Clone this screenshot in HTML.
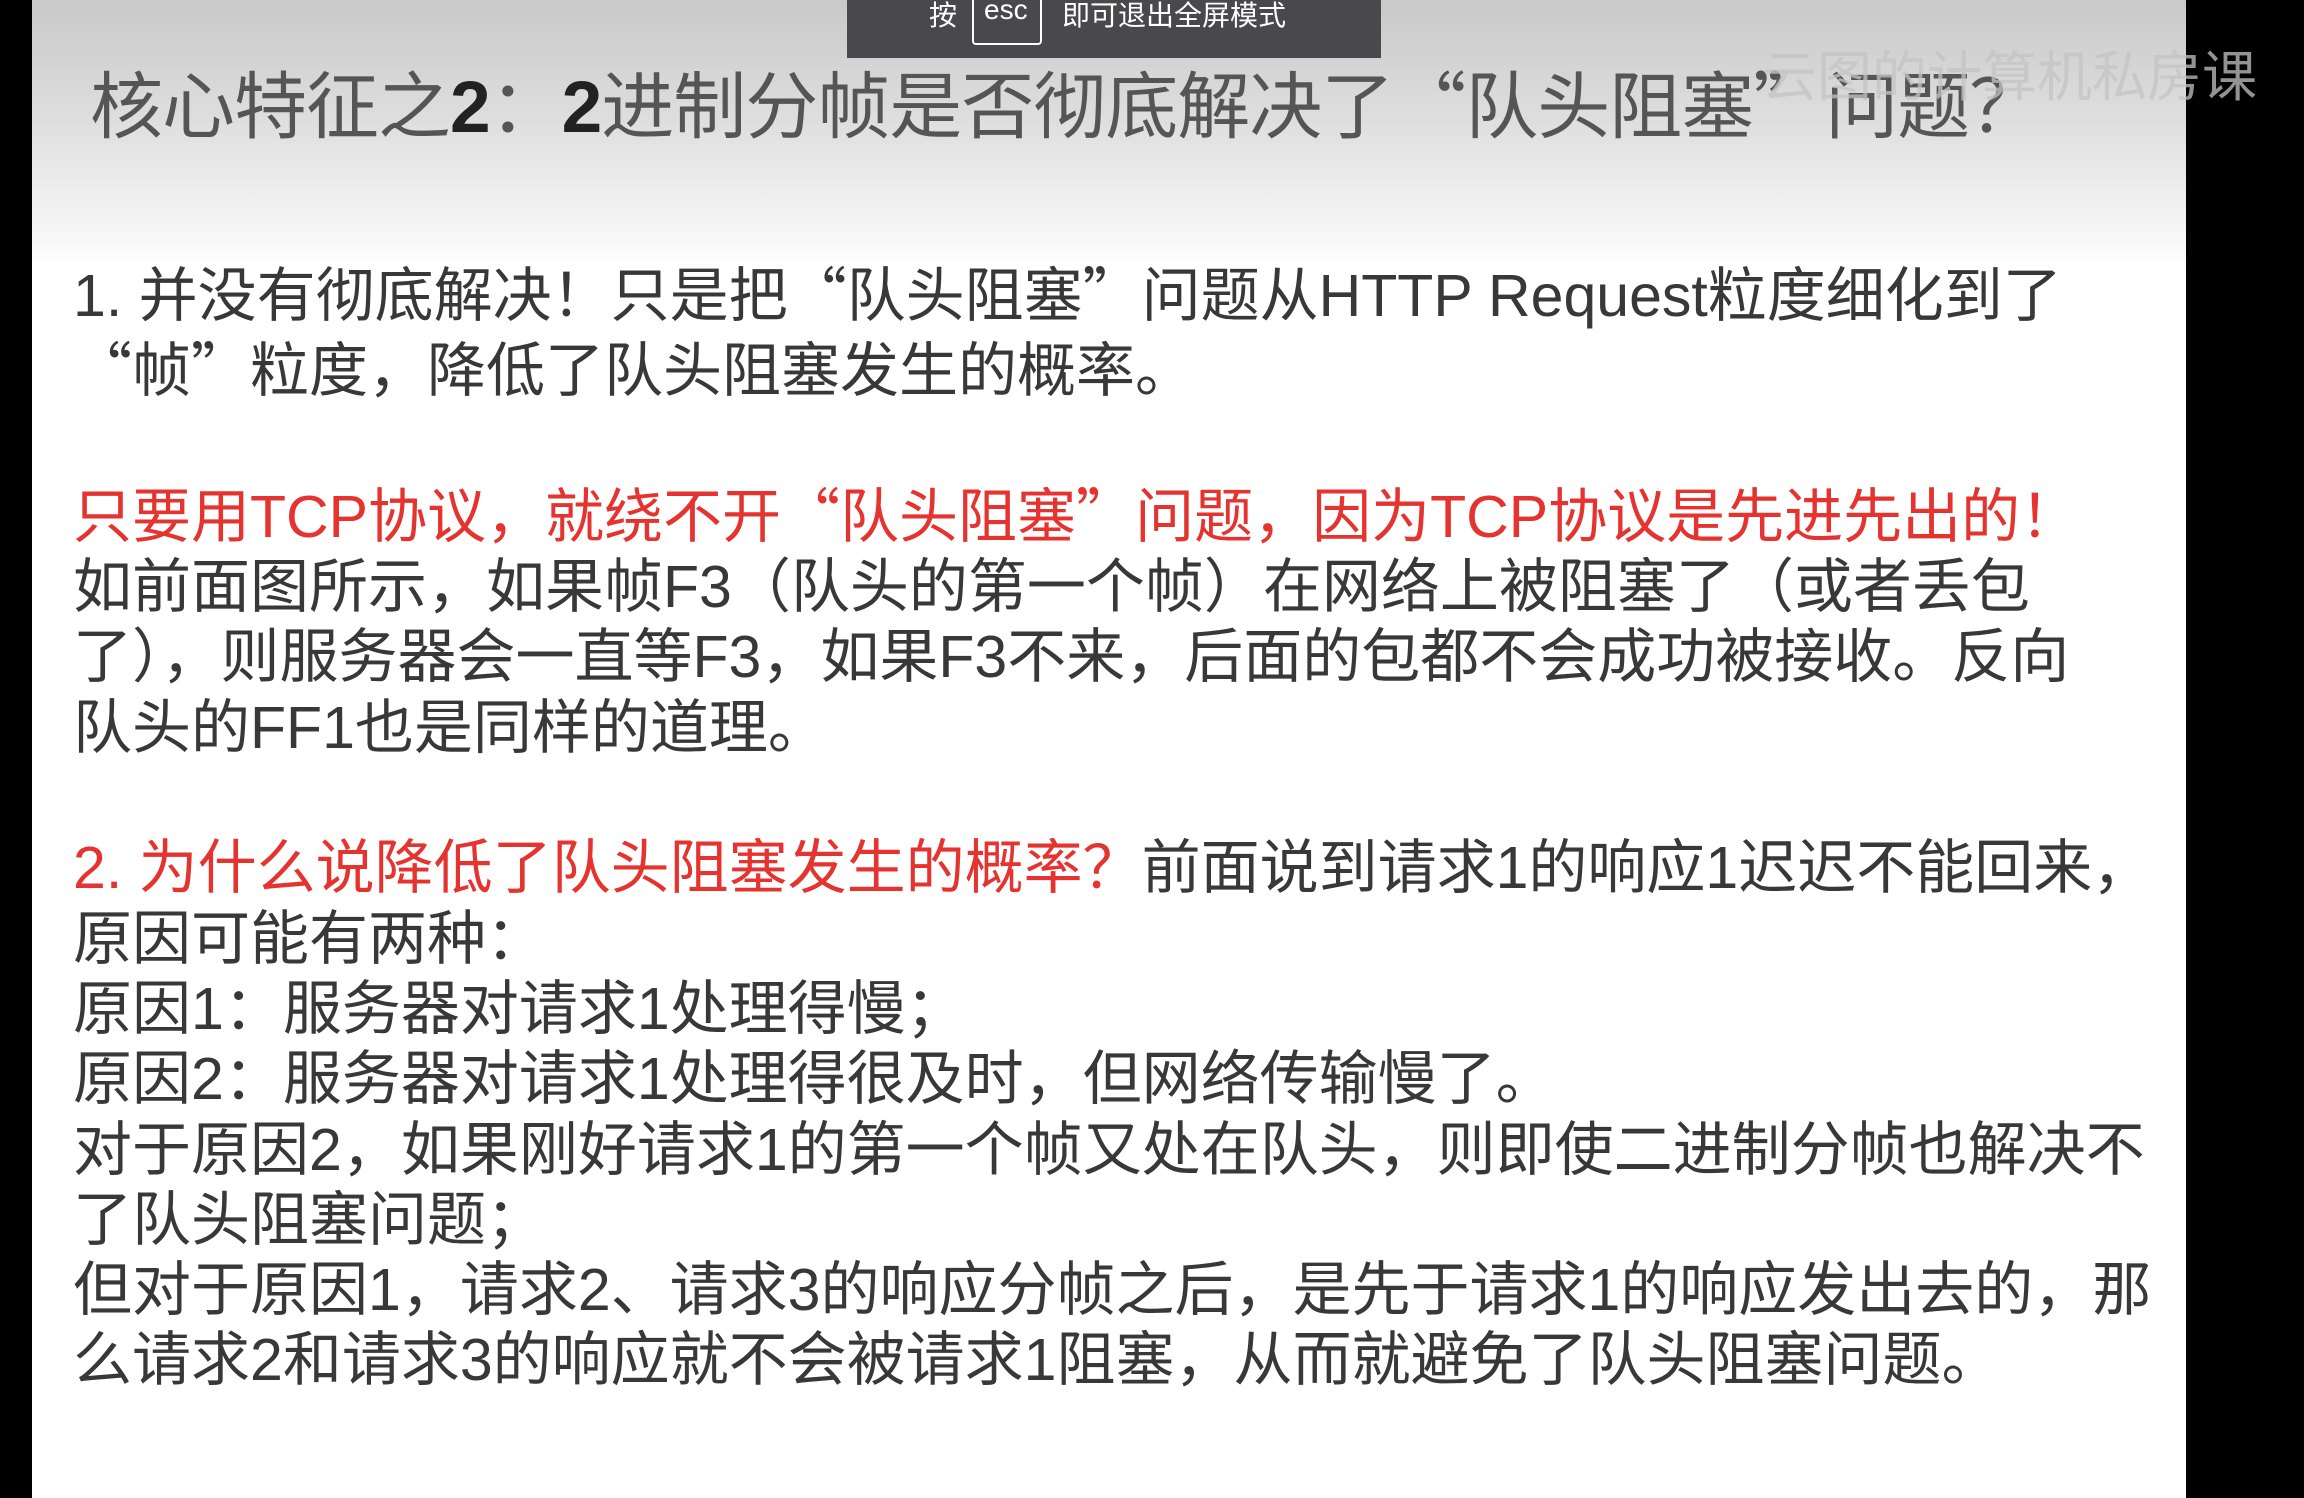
<!DOCTYPE html>
<html><head><meta charset="utf-8"><style>
html,body{margin:0;padding:0;}
body{width:2304px;height:1498px;background:#000;position:relative;overflow:hidden;font-family:"Liberation Sans","Noto Sans CJK SC",sans-serif;}
.slide{position:absolute;left:32px;top:0;width:2154px;height:1498px;background:linear-gradient(to bottom,#c9c9c9 0px,#dedede 120px,#f6f6f6 230px,#fff 270px,#fff 100%);}
.q{font-family:"Noto Sans CJK SC",sans-serif;}
.title{position:absolute;left:58px;top:56px;font-size:73px;line-height:90px;color:#555;white-space:nowrap;letter-spacing:-1px;}
.title b{color:#222;font-weight:bold;}
.wm{position:absolute;left:1730px;top:32px;font-size:55px;color:#c4c4c4;white-space:nowrap;opacity:.75;}
.body{position:absolute;left:41px;top:256px;font-size:59px;line-height:70.3px;color:#383838;white-space:nowrap;}
.r{color:#e5332f;}
.ov{position:absolute;left:847px;top:0;width:534px;height:58px;background:#48484d;color:#fff;font-size:28px;}
.ov span{position:absolute;top:-6px;white-space:nowrap;}
.esc{position:absolute;left:125px;top:-3px;width:70px;height:48px;border:2px solid #fff;border-top:none;border-radius:0 0 4px 4px;box-sizing:border-box;}
</style></head><body>
<div class="slide">
<div class="title">核心特征之<b>2</b>：<b>2</b>进制分帧是否彻底解决了<span class="q">“</span>队头阻塞<span class="q">”</span>问题？</div>
<div class="wm">云图的计算机私房课</div>
<div class="body">
1. 并没有彻底解决！只是把<span class="q">“</span>队头阻塞<span class="q">”</span>问题从HTTP Request粒度细化到了<br>
<span class="q">“</span>帧<span class="q">”</span>粒度，降低了队头阻塞发生的概率。<br>
<br>
<span class="r">只要用TCP协议，就绕不开<span class="q">“</span>队头阻塞<span class="q">”</span>问题，因为TCP协议是先进先出的！</span><br>
如前面图所示，如果帧F3（队头的第一个帧）在网络上被阻塞了（或者丢包<br>
了），则服务器会一直等F3，如果F3不来，后面的包都不会成功被接收。反向<br>
队头的FF1也是同样的道理。<br>
<br>
<span class="r">2. 为什么说降低了队头阻塞发生的概率？</span>前面说到请求1的响应1迟迟不能回来，<br>
原因可能有两种：<br>
原因1：服务器对请求1处理得慢；<br>
原因2：服务器对请求1处理得很及时，但网络传输慢了。<br>
对于原因2，如果刚好请求1的第一个帧又处在队头，则即使二进制分帧也解决不<br>
了队头阻塞问题；<br>
但对于原因1，请求2、请求3的响应分帧之后，是先于请求1的响应发出去的，那<br>
么请求2和请求3的响应就不会被请求1阻塞，从而就避免了队头阻塞问题。
</div>
</div>
<div class="ov">
<span style="left:82px">按</span>
<div class="esc"></div>
<span style="left:137px">esc</span>
<span style="left:215px">即可退出全屏模式</span>
</div>
</body></html>
